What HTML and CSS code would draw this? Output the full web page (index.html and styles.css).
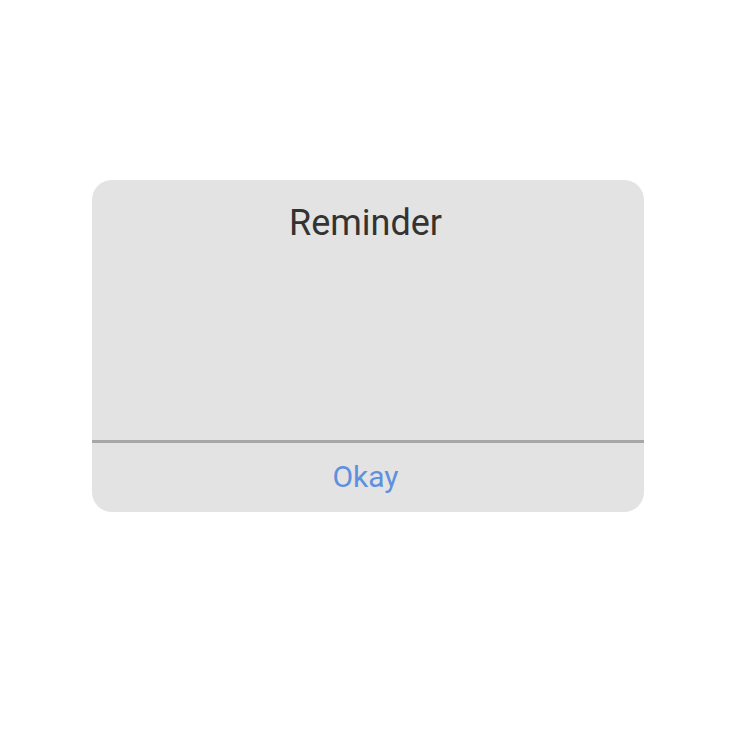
FILE: index.html
```html
<!DOCTYPE html>
<html>
<head>
<meta charset="utf-8">
<link rel="stylesheet" href="styles.css">
</head>
<body>
<div class="page">
  <div class="dialog">
    <div class="dialog-body">
      <div class="title">Reminder</div>
    </div>
    <div class="divider"></div>
    <div class="actions">
      <div class="btn">Okay</div>
    </div>
  </div>
</div>
</body>
</html>
```
FILE: styles.css
```css
html, body {
  margin: 0;
  padding: 0;
  background: #ffffff;
}
.page {
  width: 736px;
  height: 736px;
  box-sizing: border-box;
  padding-top: 180px;
  display: flex;
  flex-direction: column;
  align-items: center;
  font-family: Roboto, "Noto Sans", sans-serif;
}
.dialog {
  width: 552px;
  height: 332px;
  background: #e3e3e3;
  border-radius: 20px;
  display: flex;
  flex-direction: column;
  overflow: hidden;
}
.dialog-body {
  height: 260px;
  display: flex;
  justify-content: center;
  box-sizing: border-box;
  padding-top: 22px;
  padding-right: 5px;
}
.title {
  font-size: 36px;
  line-height: 42px;
  color: #333333;
}
.divider {
  height: 3px;
  background: #a7a7a7;
}
.actions {
  flex: 1;
  display: flex;
  align-items: center;
  justify-content: center;
  padding-right: 5px;
}
.btn {
  font-size: 30px;
  line-height: 34px;
  color: #5f8fdf;
  margin-top: -1px;
}
```
